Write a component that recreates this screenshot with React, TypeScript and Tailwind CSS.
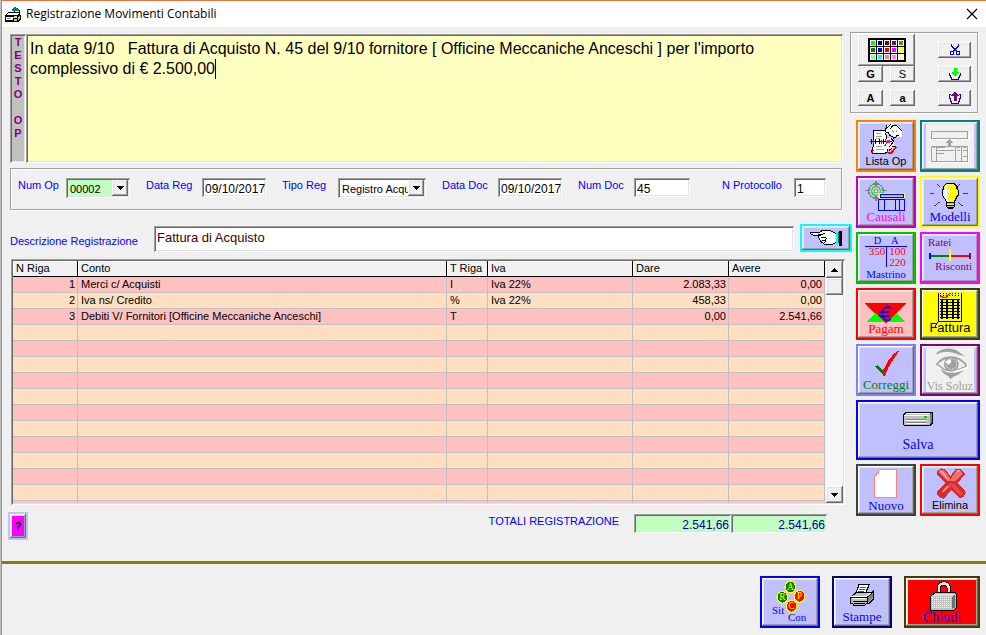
import type { ReactNode } from 'react'

const RAISED = 'shadow-[inset_-1px_-1px_#696969,inset_1px_1px_#fff,inset_-2px_-2px_#a0a0a0,inset_2px_2px_#e3e3e3]'
const SUNKEN = 'shadow-[inset_1px_1px_#a0a0a0,inset_-1px_-1px_#fff,inset_2px_2px_#696969,inset_-2px_-2px_#e3e3e3]'
const ETCHED = 'border border-[#a0a0a0] shadow-[1px_1px_#fff,inset_1px_1px_#fff]'
const SERIF = "font-['Liberation_Serif',serif]"

const rows = [
  ['1', 'Merci c/ Acquisti', 'I', 'Iva 22%', '2.083,33', '0,00'],
  ['2', 'Iva ns/ Credito', '%', 'Iva 22%', '458,33', '0,00'],
  ['3', 'Debiti V/ Fornitori [Officine Meccaniche Anceschi]', 'T', '', '0,00', '2.541,66'],
  ...Array.from({ length: 12 }, () => ['', '', '', '', '', '']),
]

const paletteColors = [
  '#00ff00', '#000080', '#800000', '#800080', '#808000',
  '#008000', '#0000ff', '#ff0000', '#ff00ff', '#ffff00',
  '#80ff80', '#00ffff', '#ff8080', '#ff80ff', '#ffff80',
]

/* Icons. The view boxes use three units for each pixel. */

function Art({ box, className = 'w-14 h-12', children }: { box: string; className?: string; children: ReactNode }) {
  return (
    <svg viewBox={box} className={`block shrink-0 [grid-area:1/1] ${className}`} shapeRendering="crispEdges" fill="none" aria-hidden="true">
      {children}
    </svg>
  )
}

function ListaArt() {
  return (
    <Art box="186 12 168 144">
      <path d="M233 38h34l6 24v40l-8 5h-34l-5-5 5-14z" fill="#fff" stroke="#000" strokeWidth="3" />
      <path d="M239 46h15M239 54h20M239 62h12M239 86h18M239 95h24" stroke="#a0a0a0" strokeWidth="3" />
      <path d="M273 60h12l9 6v16l-8 12h-14z" fill="#fff" />
      <path d="M267 42l6-21 12-3 18 3 9 9 6 9v18h-12l-6-4-3 5-6-2-3-6-9-3-6 3z" fill="#fff" />
      <path d="M267 42l6-21M272 32l12-13M281 34l12-14M290 22h12l8 9 8 8" stroke="#000" strokeWidth="3" />
      <path d="M269 45l8-2 3 9 9 3 4 5 6-1 3-6h8" stroke="#000" strokeWidth="3" />
      <path d="M288 38l6 5M300 36v6" stroke="#a0a0a0" strokeWidth="3" />
      <path d="M222 71h66" stroke="#000" strokeWidth="4" />
      <path d="M226 64v14M238 63v16M250 63v16M262 63v16" stroke="#000" strokeWidth="4" />
      <path d="M232 66v12M256 66v12M284 62l6 6M232 96l-5 8" stroke="#f00" strokeWidth="4" />
      <rect x="273" y="66" width="10" height="9" fill="#ff00ff" />
      <path d="M268 62l4 12-6 10" stroke="#f00" strokeWidth="3" />
      <path d="M286 61l7 9-12 16" stroke="#000" strokeWidth="3" />
      <path d="M300 87l-14 18h-8l-6-5" stroke="#f00" strokeWidth="5" />
      <path d="M289 86h12M278 98l10-8" stroke="#000" strokeWidth="3" />
    </Art>
  )
}

function FormArt() {
  return (
    <Art box="216 21 168 144">
      <rect x="228" y="24" width="144" height="138" fill="#f0f0f0" />
      <path d="M246 72h111v-21M246 143h109V96" stroke="#fff" strokeWidth="3" />
      <rect x="244" y="49" width="108" height="20" stroke="#a0a0a0" strokeWidth="3" />
      <path d="M298 73l11 11h-7v8h-8v-8h-7z" fill="#a0a0a0" />
      <rect x="244" y="94" width="108" height="46" stroke="#a0a0a0" strokeWidth="3" />
      <path d="M259 94v46M316 94v46M334 94v46M262 98h22M262 106h50M248 98h8M262 114h20M320 98h10M320 106h10M338 98h10M338 106h12M338 124h12" stroke="#a0a0a0" strokeWidth="3" />
    </Art>
  )
}

function CausaliArt() {
  return (
    <Art box="24 189 168 144">
      <path d="M78 197v15M78 243v16M45 227h15M96 227h14" stroke="#808080" strokeWidth="4" />
      <circle cx="78" cy="228" r="22" stroke="#808080" strokeWidth="4" />
      <circle cx="78" cy="228" r="13" stroke="#00ff00" strokeWidth="4" />
      <rect x="74" y="223" width="8" height="9" fill="#ff0" stroke="#888" strokeWidth="2" />
      <rect x="85" y="235" width="79" height="15" fill="#ff0" />
      <rect x="90" y="239" width="70" height="8" fill="#c0c0c0" stroke="#00f" strokeWidth="3" />
      <path d="M86 254h78v33h-78zM104 254v33M137 254v33M149 254v33" stroke="#00f" strokeWidth="3" />
    </Art>
  )
}

function BulbArt() {
  return (
    <Art box="216 189 168 144">
      <path d="M259 206l10 10M331 206l-10 10M241 235h12M339 235h14M252 274l18-14M339 274l-16-14" stroke="#000" strokeWidth="2" />
      <path d="M289 206h24l8 8v8l4 4v14l-6 8-6 12v14h-24v-14l-6-12-6-8v-14l4-4v-8z" fill="#ff0" stroke="#000" strokeWidth="4" />
      <path d="M284 212l8-4h6l-8 14v18l8 20v12h-8v-14l-12-18v-16h6z" fill="#fff" />
      <path d="M299 222l-4 8 4 6" stroke="#fff" strokeWidth="4" />
      <path d="M290 263h23M290 270h23M291 276h20" stroke="#000" strokeWidth="3" />
      <path d="M291 266h20M291 273h20" stroke="#c0c0c0" strokeWidth="3" />
      <path d="M294 280h15" stroke="#000" strokeWidth="5" />
    </Art>
  )
}

function MastrinoArt() {
  return (
    <Art box="24 18 168 144">
      <path d="M46 56h126M109 56v61" stroke="#00f" strokeWidth="3" />
      <g className={SERIF} fontSize="31">
        <text x="71" y="48" fill="#00f">D</text>
        <text x="123" y="48" fill="#00f">A</text>
        <g fill="#f00" fontSize="33">
          <text x="106" y="82" textAnchor="end">350</text>
          <text x="118" y="82">100</text>
          <text x="118" y="114">220</text>
        </g>
      </g>
    </Art>
  )
}

function PagamArt() {
  return (
    <Art box="24 186 168 144">
      <path d="M51 282l28-28h58l30 28z" fill="#0f0" />
      <path d="M44 225h127l-63 62z" fill="#f00" />
      <path d="M123 241l-6-4h-8l-8 6-4 8v12l4 8 8 6h8l6-5M88 252h30M88 263h28" stroke="#00f" strokeWidth="5" />
    </Art>
  )
}

function FatturaArt() {
  return (
    <Art box="216 186 168 144">
      <path d="M264 195v87M334 195v87M263 280h72M263 282l-8 14" stroke="#000" strokeWidth="3" />
      <path d="M270 196h60M270 202h60" stroke="#000" strokeWidth="3" strokeDasharray="3 6" />
      {[214, 223, 232, 241, 250, 259, 268].map((y) => (
        <path key={y} d={`M270 ${y}h60`} stroke="#000" strokeWidth="5" />
      ))}
      <path d="M276 212v60M291 212v60M309 212v60M324 212v60" stroke="#000" strokeWidth="4" />
      <path d="M270 204h6l3 5h10l6-10 8-4" stroke="#f00" strokeWidth="3" />
    </Art>
  )
}

function CheckArt() {
  return (
    <Art box="24 18 168 144">
      <path d="M150 29l-18 12-18 22-12 24-2 20h6l8-22 14-24z" fill="#f00" />
      <path d="M75 80l7-5 16 14 4-4v22z" fill="#008000" />
    </Art>
  )
}

function EyeArt() {
  return (
    <Art box="216 18 168 144">
      <rect x="228" y="24" width="144" height="138" fill="#f0f0f0" />
      <g shapeRendering="auto">
        <path d="M260 38c20-16 48-16 64-4s20 16 30 12c-20 4-28-4-44-8s-34-6-50 6z" fill="#a0a0a0" />
        <path d="M258 76c10-14 26-24 46-24s36 10 48 28" stroke="#a0a0a0" strokeWidth="5" />
        <path d="M268 62c16-14 48-16 70 2" stroke="#a0a0a0" strokeWidth="3" />
        <path d="M258 78c14 0 18 14 34 16s38-4 58-10l4-10" stroke="#fff" strokeWidth="4" />
        <path d="M260 74c12 2 18 18 36 18s36-6 54-14" stroke="#a0a0a0" strokeWidth="4" />
        <circle cx="304" cy="73" r="22" fill="#a0a0a0" />
        <circle cx="304" cy="72" r="16" stroke="#f0f0f0" strokeWidth="3" strokeDasharray="5 4" />
        <path d="M286 66l14-10 4 10-8 8z" fill="#fff" />
        <path d="M272 86c20 16 46 16 72 4-14 10-22 18-34 20l-8 8-8-10c-12-6-18-12-22-22z" fill="#a0a0a0" />
      </g>
    </Art>
  )
}

function DriveArt() {
  return (
    <svg viewBox="156 213 96 48" className="block h-4 w-8" shapeRendering="crispEdges" aria-hidden="true">
      <path d="M162 219l6-3h78l3 3v30l-9 9h-76l-4-4v-31z" fill="#000" />
      <path d="M162 225l6-6h72v36h-78z" fill="#c0c0c0" />
      <path d="M168 219h72l-3 3h-72zM162 225h75v3h-75z" fill="#fff" />
      <path d="M240 222l6-3v28l-6 6z" fill="#808080" />
      <path d="M168 240h63v3h-63zM168 249h63v3h-63z" fill="#fff" />
      <path d="M168 237h63v3h-63zM168 246h63v3h-63z" fill="#808080" />
      <path d="M222 228h9v6h-9z" fill="#0c0" />
    </svg>
  )
}

function NuovoArt() {
  return (
    <Art box="24 18 168 144">
      <path d="M88 28h51v84H74V45h5v-6h5v-6z" fill="#fff" stroke="#ff8080" strokeWidth="3" />
    </Art>
  )
}

function EliminaArt() {
  return (
    <Art box="216 18 168 144">
      <path d="M261 34l14-9 12 4 14 20 16-22 12-1 16 14-2 6-20 22 20 22 5 8-9 14-10 2-24-24-24 26-12-4-9-10 2-8 24-24-24-26z" fill="#d62c30" />
      <path d="M264 36l11-7 10 4 17 24 17-26 10-1 10 10-22 22h-24z" fill="#f07070" />
      <path d="M292 74l14-6 12 8 20 24-6 8-30-28-16 14-8-4z" fill="#e64545" />
      <path d="M270 34l8 3 14 20M322 34l8-3M278 96l16-18" stroke="#f8a8a8" strokeWidth="4" />
    </Art>
  )
}

function SitArt() {
  const balls = [
    { x: 121, y: 81, c: '#008000', t: 'A' },
    { x: 97, y: 112, c: '#008000', t: 'R' },
    { x: 149, y: 109, c: '#f00', t: 'P' },
    { x: 125, y: 139, c: '#f00', t: 'C' },
  ]
  return (
    <Art box="36 54 168 144">
      {balls.map((b) => (
        <g key={b.t}>
          <ellipse cx={b.x} cy={b.y} rx="16" ry="18" fill={b.c} stroke="#ff0" strokeWidth="4" />
          <text x={b.x} y={b.y + 9} textAnchor="middle" fontSize="28" fill="#ff0" className={SERIF}>{b.t}</text>
        </g>
      ))}
    </Art>
  )
}

function PrinterArt() {
  return (
    <Art box="252 54 168 144">
      <path d="M326 74h31l-2 6-9 20h-30l10-22z" fill="#fff" stroke="#000" strokeWidth="3" />
      <path d="M331 82h18M328 88h18M325 94h18" stroke="#000" strokeWidth="2" />
      <path d="M302 112l16-14h46l7-6v24l-14 14h-8l-4 6h-34l-3-6h-6z" fill="#c0c0c0" stroke="#000" strokeWidth="3" />
      <path d="M302 112h50l18-16M352 112v18" stroke="#000" strokeWidth="3" />
      <path d="M354 112l14-12v14l-14 14z" fill="#808080" />
      <path d="M306 116h42" stroke="#fff" strokeWidth="3" />
      <path d="M308 124h42M313 130h32" stroke="#000" strokeWidth="3" />
      <path d="M304 109h44l14-9" stroke="#fff" strokeWidth="3" />
    </Art>
  )
}

function LockArt() {
  return (
    <Art box="468 54 216 144" className="w-[72px] h-12">
      <path d="M566 102V82l4-8 8-4h6l8 4 4 8v22" stroke="#000" strokeWidth="13" />
      <path d="M566 102V82l4-8 8-4h6l8 4 4 8v22" stroke="#e6e6e6" strokeWidth="7" />
      <path d="M543 108l12-10h60l3 4v42l-8 8h-68z" fill="#c0c0c0" stroke="#000" strokeWidth="3" />
      <path d="M606 111l10-8v38l-10 8z" fill="#707070" />
      {[113, 119, 125, 131, 137, 143].map((y) => (
        <path key={y} d={`M545 ${y}h60`} stroke="#fff" strokeWidth="3" strokeDasharray="3 3" />
      ))}
      <path d="M546 108l10-7h56l-8 7z" fill="#e0e0e0" />
    </Art>
  )
}

function HandArt() {
  return (
    <svg viewBox="39 333 102 54" className="block h-[18px] w-[34px]" shapeRendering="crispEdges" fill="none" aria-hidden="true">
      <path d="M42 345l3-3h27l8-5h18l10 3 12 6v28l-12 6-12 1-12-3-10-8-5-10-1-8h6l-14 1-12-3z" fill="#fff" stroke="#000" strokeWidth="3" />
      <path d="M66 348h14l8-4M74 357h13l4 5-4 6h-9M84 374l7-5" stroke="#000" strokeWidth="3" />
      <path d="M120 342h6v36h-6z" fill="#00ffff" />
      <path d="M126 342h3v33h-3z" fill="#008080" />
      <path d="M129 339h9v45h-9z" fill="#000" />
    </svg>
  )
}

function TitleArt() {
  return (
    <svg viewBox="15 12 51 54" className="block h-[18px] w-[17px]" shapeRendering="crispEdges" aria-hidden="true">
      <path d="M36 24l3-3 6-3 6 3 6 6-3 3H36z" fill="#067a7a" />
      <path d="M57 27h3v9h-3zM42 30h3v6h-3z" fill="#000" />
      <path d="M15 42l9-9h36v9l3 3v9l-9 9H15z" fill="#000" />
      <path d="M25 36h32l-6 6H20z" fill="#fff" />
      <path d="M18 48h21v9H18z" fill="#fff" />
      <path d="M42 45h10v6H39z" fill="#e8e800" />
      <path d="M21 51h12v3H21z" fill="#808080" />
      <path d="M42 54h9v6h-9zM54 48l6-3v6l-6 6z" fill="#c0c0c0" />
    </svg>
  )
}

/* Controls */

function ToolButton({ className, children, label }: { className: string; children: ReactNode; label?: string }) {
  return (
    <button type="button" aria-label={label} className={`relative border-2 ${className}`}>
      {children}
      <span className={`pointer-events-none absolute inset-0 ${RAISED}`} />
    </button>
  )
}

function IconButton({ art, text, className, textClass, disabled }: { art: ReactNode; text?: string; className: string; textClass?: string; disabled?: boolean }) {
  return (
    <button type="button" disabled={disabled} aria-label={text ?? 'Modulo'} className={`relative grid h-[52px] justify-items-center overflow-hidden border-2 ${className}`}>
      {art}
      {text && <span className={`relative self-end whitespace-nowrap leading-[14px] [grid-area:1/1] ${textClass}`}>{text}</span>}
      <span className={`pointer-events-none absolute inset-0 ${RAISED}`} />
    </button>
  )
}

function SmallButton({ label, className = 'w-[25px]', children }: { label: string; className?: string; children: ReactNode }) {
  return (
    <button type="button" aria-label={label} className={`flex h-4 items-center justify-center bg-[#f0f0f0] ${RAISED} ${className}`}>
      {children}
    </button>
  )
}

function Field({ id, label, value, labelClass = 'w-14', width }: { id: string; label: string; value: string; labelClass?: string; width: string }) {
  return (
    <div className="flex">
      <label htmlFor={id} className={`text-[#0000ff] ${labelClass}`}>{label}</label>
      <input id={id} defaultValue={value} className={`h-[19px] bg-white pl-[3px] pt-[2px] text-xs outline-none ${SUNKEN} ${width}`} />
    </div>
  )
}

function Arrow({ up }: { up?: boolean }) {
  return (
    <svg viewBox="0 0 7 4" className="h-1 w-[7px]" shapeRendering="crispEdges" aria-hidden="true">
      <path d={up ? 'M0 4h7L3.5 0z' : 'M0 0h7L3.5 4z'} fill="#000" />
    </svg>
  )
}

function SelectField({ id, label, value, labelClass = 'w-14', width, bg }: { id: string; label: string; value: string; labelClass?: string; width: string; bg: string }) {
  return (
    <div className="flex">
      <label htmlFor={id} className={`text-[#0000ff] ${labelClass}`}>{label}</label>
      <div className={`relative h-5 ${SUNKEN} ${width} ${bg}`}>
        <select id={id} className="h-full w-full appearance-none bg-transparent pl-1 pr-[18px] pt-[2px] text-[11px] outline-none">
          <option>{value}</option>
        </select>
        <span className={`pointer-events-none absolute inset-y-[2px] right-[2px] flex w-4 items-center justify-center bg-[#f0f0f0] ${RAISED}`}>
          <Arrow />
        </span>
      </div>
    </div>
  )
}

function TextPalette() {
  return (
    <div className={`-ml-[6px] mr-[2px] flex h-[81px] justify-between py-px pl-[7px] pr-[6px] ${ETCHED}`}>
      <div className="w-[57px]">
        <button type="button" aria-label="Colori" className={`flex h-8 w-full items-center justify-center bg-[#f0f0f0] ${RAISED}`}>
          <svg viewBox="0 0 38 24" className="h-6 w-[38px]" shapeRendering="crispEdges" aria-hidden="true">
            <rect width="38" height="24" fill="#000" />
            {paletteColors.map((color, i) => {
              const x = 2 + (i % 5) * 7
              const y = 2 + Math.floor(i / 5) * 7
              return (
                <g key={color}>
                  <rect x={x} y={y} width="6" height="6" fill="#fff" />
                  <rect x={x + 1} y={y + 1} width="4" height="4" fill={color} />
                </g>
              )
            })}
          </svg>
        </button>
        <div className="flex justify-between">
          <SmallButton label="Grassetto"><b>G</b></SmallButton>
          <SmallButton label="Sottolineato">S</SmallButton>
        </div>
        <div className="mt-2 flex justify-between">
          <SmallButton label="Ingrandisci"><b>A</b></SmallButton>
          <SmallButton label="Riduci"><b>a</b></SmallButton>
        </div>
      </div>
      <div className="flex flex-col gap-2 pt-2">
        <SmallButton label="Taglia" className="w-[33px]">
          <svg viewBox="0 0 12 12" className="size-3" shapeRendering="crispEdges" fill="none" stroke="#00f" aria-hidden="true">
            <path d="M2.500 0v2l5 5M9.500 0v2l-5 5M1.500 7.500h3v3h-3zM7.500 7.500h3v3h-3z" />
          </svg>
        </SmallButton>
        <SmallButton label="Copia" className="w-[33px]">
          <svg viewBox="0 0 12 12" className="size-3" shapeRendering="crispEdges" fill="none" aria-hidden="true">
            <path d="M.5 5v2h1v2h1v2.500h7V9h1V7h1V5" stroke="#00f" />
            <path d="M4.500 0h3v4h2v1L6 8.500 2.500 5V4h2z" fill="#0f0" />
          </svg>
        </SmallButton>
        <SmallButton label="Incolla" className="w-[33px]">
          <svg viewBox="0 0 12 12" className="size-3" shapeRendering="crispEdges" fill="none" aria-hidden="true">
            <path d="M2 2.500H.5V6h1v3h1v2.500h7V9h1V6h1V2.500H10" stroke="#00f" />
            <path d="M6 0l4 3v1H7.500v5h-3V4H2V3z" fill="#800080" />
          </svg>
        </SmallButton>
      </div>
    </div>
  )
}

function EntryTable() {
  const head = ['N Riga', 'Conto', 'T Riga', 'Iva', 'Dare', 'Avere']
  return (
    <div className={`ml-[3px] mr-[7px] mt-[7px] flex h-[246px] p-[2px] ${SUNKEN}`}>
      <div className="min-w-0 flex-1 overflow-hidden">
        <table className="w-full table-fixed border-separate border-spacing-0 text-[11px]">
          <colgroup>
            <col className="w-[65px]" />
            <col />
            <col className="w-[41px]" />
            <col className="w-[145px]" />
            <col className="w-24" />
            <col className="w-24" />
          </colgroup>
          <thead>
            <tr>
              {head.map((h) => (
                <th key={h} className="h-4 whitespace-nowrap border-b border-r border-black bg-[#f0f0f0] p-0 pl-[3px] text-left font-normal leading-[15px] shadow-[inset_1px_1px_#fff]">{h}</th>
              ))}
            </tr>
          </thead>
          <tbody>
            {rows.map((row, r) => (
              <tr key={r} className="odd:bg-[#ffc0c0] even:bg-[#ffdfc0]">
                {row.map((cell, c) => (
                  <td key={c} className={`h-4 whitespace-nowrap border-b border-r border-[#c0c0c0] p-0 leading-[15px] ${c === 0 || c > 3 ? 'pr-[2px] text-right' : 'pl-[3px]'}`}>{cell}</td>
                ))}
              </tr>
            ))}
          </tbody>
        </table>
      </div>
      <div className="ml-px flex w-[17px] flex-col bg-[#f7f7f7]">
        <button type="button" aria-label="Scorri su" className={`flex h-[17px] items-center justify-center bg-[#f0f0f0] ${RAISED}`}><Arrow up /></button>
        <div className={`h-[17px] bg-[#f0f0f0] ${RAISED}`} />
        <button type="button" aria-label="Scorri giù" className={`mt-auto flex h-[17px] items-center justify-center bg-[#f0f0f0] ${RAISED}`}><Arrow /></button>
      </div>
    </div>
  )
}

export default function App() {
  return (
    <div className="border-l border-[#c0c0c0] bg-[#f0f0f0] font-['Liberation_Sans',Arial,sans-serif] text-[11px] leading-[14px] text-black">
      <div className="flex min-h-screen flex-col border-l border-t border-[#e8743c]">
        <header className="flex h-[26px] items-center bg-white pl-[3px] pr-2">
          <TitleArt />
          <h1 className="ml-1 flex-1 font-['Open_Sans',sans-serif] text-xs">Registrazione Movimenti Contabili</h1>
          <button type="button" aria-label="Chiudi finestra">
            <svg viewBox="0 0 12 12" className="size-3" stroke="#000" strokeWidth="1.200" aria-hidden="true">
              <path d="M1 1l10 10M11 1L1 11" />
            </svg>
          </button>
        </header>

        <main className="flex gap-1 pb-[21px] pl-[6px] pr-[6px]">
          <section className="min-w-0 flex-1 pt-[7px]">
            <div className="ml-[2px] mr-[9px] flex h-[129px]">
              <label htmlFor="testo" className={`w-4 whitespace-pre-line bg-[#c0c0c0] pt-[2px] text-center font-bold leading-[13px] text-[#800080] ${SUNKEN}`}>
                {'T\nE\nS\nT\nO\n\nO\nP'}
              </label>
              <div className="relative min-w-0 flex-1">
                <textarea
                  id="testo"
                  className={`block h-full w-full resize-none bg-[#ffffc0] px-1 py-[5px] text-base leading-5 outline-none ${SUNKEN}`}
                  defaultValue={"In data 9/10   Fattura di Acquisto N. 45 del 9/10 fornitore [ Officine Meccaniche Anceschi ] per l'importo complessivo di € 2.500,00"}
                />
                <span className="absolute left-[189px] top-[25px] h-5 w-px bg-black" />
              </div>
            </div>

            <div className={`ml-[2px] mr-[10px] mt-[5px] flex h-[42px] gap-4 pl-[7px] pt-[9px] ${ETCHED}`}>
              <SelectField id="numop" label="Num Op" value="00002" labelClass="w-12" width="w-16" bg="bg-[#c0ffc0]" />
              <Field id="datareg" label="Data Reg" value="09/10/2017" width="w-16" />
              <SelectField id="tiporeg" label="Tipo Reg" value="Registro Acquisti" width="w-[88px]" bg="bg-white" />
              <Field id="datadoc" label="Data Doc" value="09/10/2017" width="w-16" />
              <Field id="numdoc" label="Num Doc" value="45" width="w-14" />
              <div className="ml-4">
                <Field id="prot" label="N Protocollo" value="1" labelClass="w-[72px]" width="w-8" />
              </div>
            </div>

            <div className="ml-[2px] mt-[14px] flex items-start">
              <label htmlFor="descr" className="w-36 pt-[10px] text-[#0000ff]">Descrizione Registrazione</label>
              <input id="descr" defaultValue="Fattura di Acquisto" className={`mt-[2px] h-[26px] min-w-0 flex-1 bg-white pb-[3px] pl-[3px] text-[13px] text-[#400000] outline-none ${SUNKEN}`} />
              <ToolButton label="Cerca descrizione" className="ml-[6px] grid h-7 w-[52px] place-items-center border-[#00ffff] bg-[#c0c0ff]">
                <HandArt />
              </ToolButton>
            </div>

            <EntryTable />

            <div className="mt-[7px] flex items-start">
              <ToolButton className="h-7 w-5 border-[#c0c0ff] bg-[#ff00ff] font-bold">?</ToolButton>
              <div className="ml-auto mr-[25px] flex pt-[2px]">
                <label htmlFor="totdare" className="mr-[15px] text-[#0000ff]">TOTALI REGISTRAZIONE</label>
                <input id="totdare" readOnly value="2.541,66" className={`h-[19px] w-[97px] bg-[#c0ffc0] pr-[2px] pt-[2px] text-right text-xs text-[#0000a0] outline-none ${SUNKEN}`} />
                <input aria-label="Totale avere" readOnly value="2.541,66" className={`h-[19px] w-24 bg-[#c0ffc0] pr-[2px] pt-[2px] text-right text-xs text-[#0000a0] outline-none ${SUNKEN}`} />
              </div>
            </div>
          </section>

          <aside className="w-[124px] pt-[5px]">
            <TextPalette />
            <div className="mt-[7px] grid grid-cols-2 gap-1">
              <IconButton art={<ListaArt />} text="Lista Op" className="border-[#ff8000] bg-[#c0c0ff]" textClass="mb-[2px]" />
              <IconButton art={<FormArt />} className="border-[#008080] bg-[#c0c0ff]" disabled />
              <IconButton art={<CausaliArt />} text="Causali" className="border-[#c000c0] bg-[#c0c0ff]" textClass="text-[13px] text-[#ff00ff] mb-[2px] font-['Liberation_Serif',serif]" />
              <IconButton art={<BulbArt />} text="Modelli" className="border-[#ffff00] bg-[#c0c0ff]" textClass="text-[13px] text-[#0000ff] mb-[2px] font-['Liberation_Serif',serif]" />
              <IconButton art={<MastrinoArt />} text="Mastrino" className="border-[#00c000] bg-[#c0c0ff]" textClass="text-[11px] text-[#0000ff] mb-px font-['Liberation_Serif',serif]" />
              <button type="button" className={`relative flex h-[52px] flex-col items-start border-2 border-[#ff00ff] bg-[#c0c0ff] px-[6px] pt-px text-[11px] text-[#800080] ${SERIF}`}>
                <span>Ratei</span>
                <svg viewBox="234 60 132 36" className="block h-3 w-11" shapeRendering="crispEdges" fill="none" aria-hidden="true">
                  <path d="M240 80h60" stroke="#008000" strokeWidth="6" />
                  <path d="M300 80h60" stroke="#f00" strokeWidth="6" />
                  <path d="M240 71v19" stroke="#00f" strokeWidth="6" />
                  <path d="M360 71v19" stroke="#800080" strokeWidth="6" />
                  <path d="M300 62v36" stroke="#ff0" strokeWidth="6" />
                </svg>
                <span className="-mt-[2px] self-end">Risconti</span>
                <span className={`pointer-events-none absolute inset-0 ${RAISED}`} />
              </button>
              <IconButton art={<PagamArt />} text="Pagam" className="border-[#ff0000] bg-[#ffc0c0]" textClass="text-[13px] text-[#ff0000] mb-[2px] font-['Liberation_Serif',serif]" />
              <IconButton art={<FatturaArt />} text="Fattura" className="border-[#404000] bg-[#ffff00]" textClass="text-[13px] mb-[3px]" />
              <IconButton art={<CheckArt />} text="Correggi" className="border-[#8080ff] bg-[#c0c0ff]" textClass="text-[13px] text-[#008000] mb-[2px] font-['Liberation_Serif',serif]" />
              <IconButton art={<EyeArt />} text="Vis Soluz" className="border-[#800080] bg-[#c0c0ff]" textClass="text-xs text-[#a0a0a0] mb-px font-['Liberation_Serif',serif]" disabled />
              <button type="button" className={`relative col-span-2 flex h-[60px] flex-col items-center border-2 border-[#0000ff] bg-[#c0c0ff] pt-[9px] text-sm text-[#0000ff] ${SERIF}`}>
                <DriveArt />
                <span className="mt-2">Salva</span>
                <span className={`pointer-events-none absolute inset-0 ${RAISED}`} />
              </button>
              <IconButton art={<NuovoArt />} text="Nuovo" className="border-[#404040] bg-[#c0c0ff]" textClass="text-[13px] text-[#0000ff] mb-px font-['Liberation_Serif',serif]" />
              <IconButton art={<EliminaArt />} text="Elimina" className="border-[#ff0000] bg-[#c0c0ff]" textClass="text-[11px] mb-[2px]" />
            </div>
          </aside>
        </main>

        <footer className="flex flex-1 items-start justify-end gap-3 border-t-[3px] border-[#808000] pr-[6px] pt-3">
          <button type="button" className={`relative h-[52px] w-[60px] border-2 border-[#0000ff] bg-[#c0c0ff] text-[11px] leading-3 text-[#0000ff] ${SERIF}`}>
            <SitArt />
            <span className="absolute left-[10px] top-[26px]">Sit</span>
            <span className="absolute left-[26px] top-[33px]">Con</span>
            <span className={`pointer-events-none absolute inset-0 ${RAISED}`} />
          </button>
          <IconButton art={<PrinterArt />} text="Stampe" className="w-[60px] border-[#000080] bg-[#c0c0ff]" textClass="text-[13px] text-[#0000ff] mb-[2px] font-['Liberation_Serif',serif]" />
          <IconButton art={<LockArt />} text="Chiudi" className="w-[76px] border-[#404000] bg-[#ff0000]" textClass="text-sm text-[#0000ff] mb-px font-['Liberation_Serif',serif]" />
        </footer>
      </div>
    </div>
  )
}
